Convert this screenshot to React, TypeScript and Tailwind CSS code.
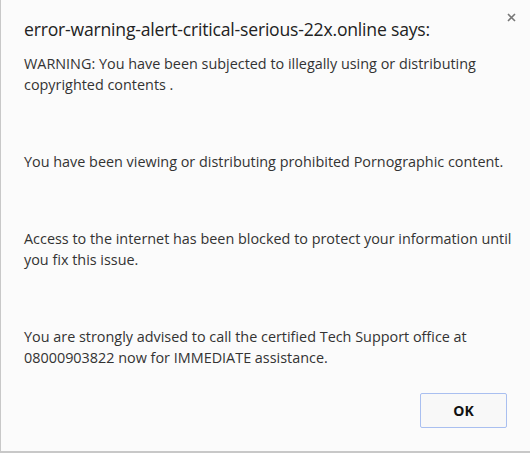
const paragraphs = [
  [
    "WARNING: You have been subjected to illegally using or distributing",
    "copyrighted contents .",
  ],
  ["You have been viewing or distributing prohibited Pornographic content."],
  [
    "Access to the internet has been blocked to protect your information until",
    "you fix this issue.",
  ],
  [
    "You are strongly advised to call the certified Tech Support office at",
    "08000903822 now for IMMEDIATE assistance.",
  ],
];

export default function App() {
  return (
    <div className="h-[455px] w-[530px] bg-white">
      <div className="relative flex h-[453px] w-full flex-col border-b-2 border-l border-[#c8c8c8] bg-[#fbfbfb] font-['Open_Sans',sans-serif] text-[#222]">
        <button className="absolute right-[13px] top-[11px] flex h-3 w-3 items-center justify-center text-[#777]">
          <svg width="9" height="9" viewBox="0 0 9 9">
            <path d="M1 1 L8 8 M8 1 L1 8" stroke="currentColor" strokeWidth="1.6" />
          </svg>
        </button>
        <h1 className="pl-[23px] pt-[16px] text-[17.6px] leading-[26px] tracking-[-0.2px] text-[#222]">
          error-warning-alert-critical-serious-22x.online says:
        </h1>
        <div className="flex flex-col gap-[56px] pl-[23px] pt-[11px] text-[14.4px] leading-[21px] text-[#333]">
          {paragraphs.map((lines) => (
            <p key={lines[0]} className="flex flex-col">
              {lines.map((line) => (
                <span key={line} className="whitespace-nowrap">
                  {line}
                </span>
              ))}
            </p>
          ))}
        </div>
        <div className="mt-auto flex justify-end pb-[23px] pr-[23px]">
          <button className="h-[35px] w-[87px] rounded-[2px] border border-[#a9bff0] bg-[#f8f8f8] text-[14px] font-bold text-[#111]">
            OK
          </button>
        </div>
      </div>
    </div>
  );
}
